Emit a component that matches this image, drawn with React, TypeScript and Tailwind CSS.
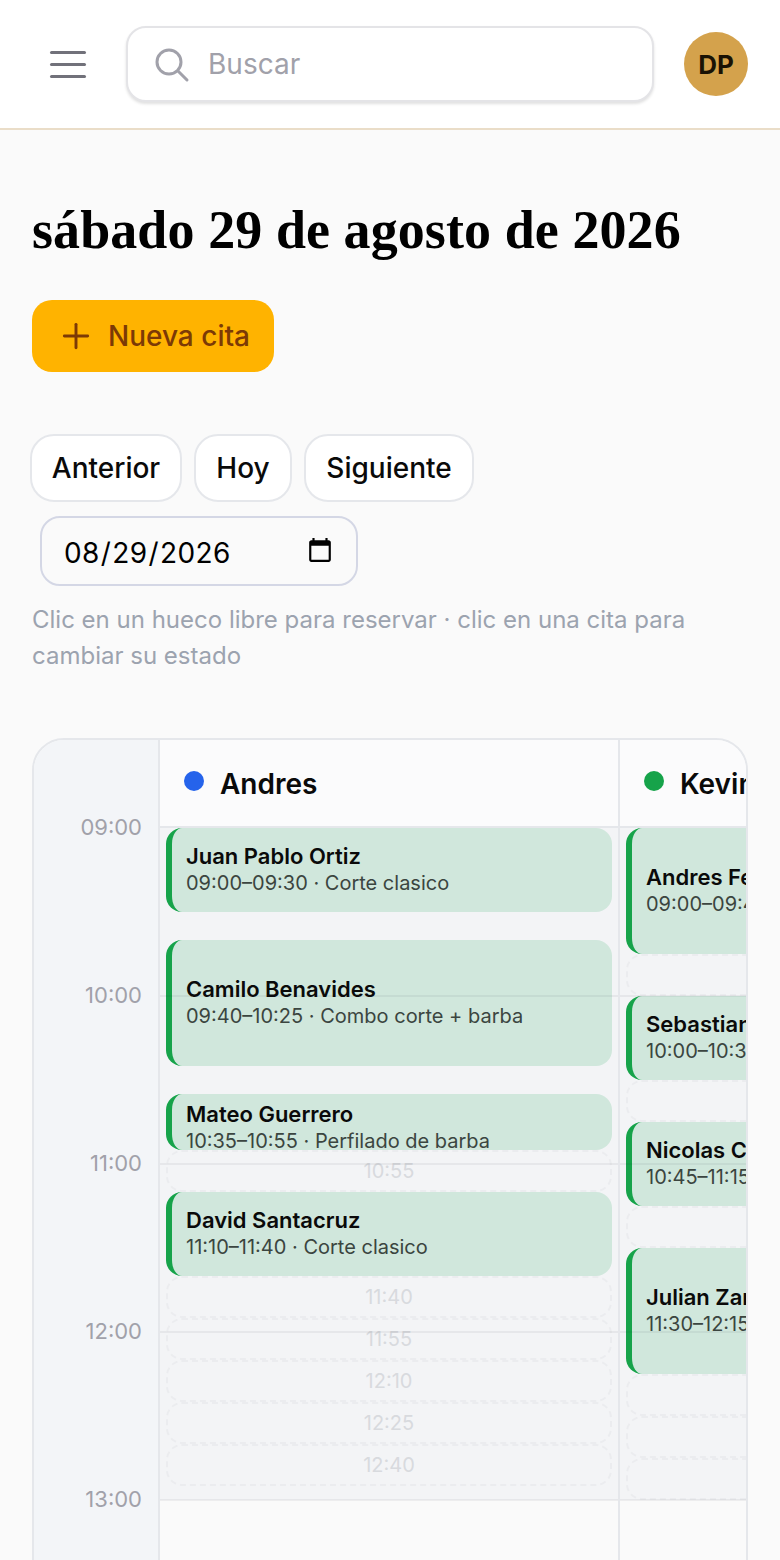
// Agenda del dia - vista movil

import React from 'react';
import { Plus } from 'lucide-react';

const PX_PER_MIN = 2.8;
const START = 9 * 60;

function toMin(t: string) {
  const [h, m] = t.split(':').map(Number);
  return h * 60 + m;
}

function placeStyle(from: string, to: string) {
  return {
    top: (toMin(from) - START) * PX_PER_MIN,
    height: (toMin(to) - toMin(from)) * PX_PER_MIN,
  };
}

type Cita = { name: string; from: string; to: string; service: string };
type Barbero = { name: string; dot: string; citas: Cita[]; libres: [string, string][] };

const barberos: Barbero[] = [
  {
    name: 'Andres',
    dot: 'bg-[#2563eb]',
    citas: [
      { name: 'Juan Pablo Ortiz', from: '09:00', to: '09:30', service: 'Corte clasico' },
      { name: 'Camilo Benavides', from: '09:40', to: '10:25', service: 'Combo corte + barba' },
      { name: 'Mateo Guerrero', from: '10:35', to: '10:55', service: 'Perfilado de barba' },
      { name: 'David Santacruz', from: '11:10', to: '11:40', service: 'Corte clasico' },
    ],
    libres: [
      ['10:55', '11:10'],
      ['11:40', '11:55'],
      ['11:55', '12:10'],
      ['12:10', '12:25'],
      ['12:25', '12:40'],
      ['12:40', '12:55'],
    ],
  },
  {
    name: 'Kevin',
    dot: 'bg-[#16a34a]',
    citas: [
      { name: 'Andres Felipe Rosero', from: '09:00', to: '09:45', service: 'Combo corte + barba' },
      { name: 'Sebastian Munoz', from: '10:00', to: '10:30', service: 'Corte clasico' },
      { name: 'Nicolas Cabrera', from: '10:45', to: '11:15', service: 'Corte clasico' },
      { name: 'Julian Zarama', from: '11:30', to: '12:15', service: 'Combo corte + barba' },
    ],
    libres: [
      ['09:45', '10:00'],
      ['10:30', '10:45'],
      ['11:15', '11:30'],
      ['12:15', '12:30'],
      ['12:30', '12:45'],
      ['12:45', '13:00'],
    ],
  },
];

const horas = ['09:00', '10:00', '11:00', '12:00', '13:00'];

function Columna({ barbero }: { barbero: Barbero }) {
  return (
    <div className="w-[460px] shrink-0 border-l-2 border-[#e5e7eb]">
      <div className="flex h-[88px] items-center gap-4 border-b-2 border-[#e5e7eb] bg-[#fbfbfc] pl-6">
        <span className={`-mt-1 size-5 rounded-full ${barbero.dot}`} />
        <span className="pt-0.5 text-[28px] font-semibold text-[#0a0a0a]">{barbero.name}</span>
      </div>
      <div className="relative h-[900px]">
        <div className="h-[672px] bg-[#f3f4f6]" />
        {barbero.libres.map(([from, to]) => (
          <div
            key={from}
            className="absolute inset-x-1.5 flex items-center justify-center rounded-2xl border-2 border-dashed border-[#ebecef] text-[20px] text-[#d8dade]"
            style={placeStyle(from, to)}
          >
            {from}
          </div>
        ))}
        {barbero.citas.map((c) => {
          const corta = toMin(c.to) - toMin(c.from) < 25;
          return (
            <div
              key={c.from}
              className={`absolute inset-x-1.5 flex flex-col overflow-hidden rounded-2xl border-l-[6px] border-[#16a34a] bg-[#d0e7dc] pl-3.5 ${corta ? 'justify-start pt-1.5' : 'justify-center pb-0.5'}`}
              style={placeStyle(c.from, c.to)}
            >
              <div className="shrink-0 truncate text-[22px] leading-7 font-semibold text-[#0a0a0a]">{c.name}</div>
              <div className="shrink-0 truncate text-[20px] leading-[26px] text-[#3b4540]">
                {c.from}–{c.to} · {c.service}
              </div>
            </div>
          );
        })}
        {[60, 120, 180, 240].map((min) => (
          <div
            key={min}
            className="absolute inset-x-0 h-0.5 bg-[#1f2937]/[0.06]"
            style={{ top: (min * PX_PER_MIN) - 1 }}
          />
        ))}
      </div>
    </div>
  );
}

export default function App() {
  return (
    <div className="h-[1560px] overflow-hidden bg-[#fafafa] font-['Inter',sans-serif] text-[#0a0a0a]">
      {/* Top bar */}
      <header className="flex h-[130px] items-center border-b-2 border-[#eaddc8] bg-white pr-8 pl-[50px]">
        <button className="mr-10 flex w-9 flex-col gap-[9px]">
          <span className="h-[3px] rounded-full bg-[#71717a]" />
          <span className="h-[3px] rounded-full bg-[#71717a]" />
          <span className="h-[3px] rounded-full bg-[#71717a]" />
        </button>
        <div className="flex h-[76px] w-[528px] items-center gap-[18px] rounded-[20px] border-2 border-[#e4e4e7] bg-white pl-[24px] shadow-[0_2px_3px_rgba(0,0,0,0.12)]">
          <svg width="38" height="38" viewBox="0 0 38 38" fill="none" stroke="#a1a1aa" strokeWidth="3" strokeLinecap="round">
            <circle cx="17" cy="17" r="12" />
            <path d="M26 26l9 9" />
          </svg>
          <input
            placeholder="Buscar"
            className="min-w-0 flex-1 bg-transparent text-[28px] outline-none placeholder:text-[#a1a1aa]"
          />
        </div>
        <div className="ml-[30px] flex size-16 items-center justify-center rounded-full bg-[#d4a24c] text-[26px] font-bold text-[#1a1204]">
          DP
        </div>
      </header>

      <main className="px-8">
        <h1 className="mt-[66px] font-['Liberation_Serif',serif] text-[54px] leading-[68px] font-bold tracking-[0.08px] text-black">
          sábado 29 de agosto de 2026
        </h1>

        <button className="mt-[36px] flex h-[72px] w-[242px] items-center gap-3 rounded-[20px] bg-[#ffb300] pl-6 text-[28px] font-medium text-[#7c3a06]">
          <Plus size={40} strokeWidth={1.75} />
          Nueva cita
        </button>

        {/* Navegacion de fecha */}
        <div className="mt-[62px] -ml-0.5 flex flex-wrap gap-x-3 gap-y-3.5">
          <button className="h-[68px] w-[152px] rounded-3xl border-2 border-[#e5e7eb] bg-white text-[28px] font-medium">Anterior</button>
          <button className="h-[68px] w-[98px] rounded-3xl border-2 border-[#e5e7eb] bg-white text-[28px] font-medium">Hoy</button>
          <button className="h-[68px] w-[170px] rounded-3xl border-2 border-[#e5e7eb] bg-white text-[28px] font-medium">Siguiente</button>
          <input
            type="date"
            defaultValue="2026-08-29"
            className="ml-2.5 h-[70px] w-[318px] rounded-[20px] border-2 border-[#d4d7e5] bg-transparent pt-1 pr-[22px] pl-[21px] text-[28px] tracking-[0.4px] text-black outline-none [&::-webkit-calendar-picker-indicator]:-mt-1 [&::-webkit-calendar-picker-indicator]:size-7 [&::-webkit-calendar-picker-indicator]:p-0"
          />
        </div>

        <p className="mt-4 text-[24px] leading-9 text-[#9ca3af]">
          Clic en un hueco libre para reservar · clic en una cita para cambiar su estado
        </p>

        {/* Agenda */}
        <div className="mt-[64px] flex overflow-hidden rounded-[32px] border-2 border-[#e5e7eb] bg-[#fafafa]">
          <div className="relative w-[124px] shrink-0 bg-[#f3f5f8] pt-[88px]">
            {horas.map((h, i) => (
              <div
                key={h}
                className="absolute right-4 -translate-y-1/2 text-[22px] leading-7 text-[#a1a1aa]"
                style={{ top: 87 + i * 60 * PX_PER_MIN }}
              >
                {h}
              </div>
            ))}
          </div>
          {barberos.map((b) => (
            <Columna key={b.name} barbero={b} />
          ))}
        </div>
      </main>
    </div>
  );
}
